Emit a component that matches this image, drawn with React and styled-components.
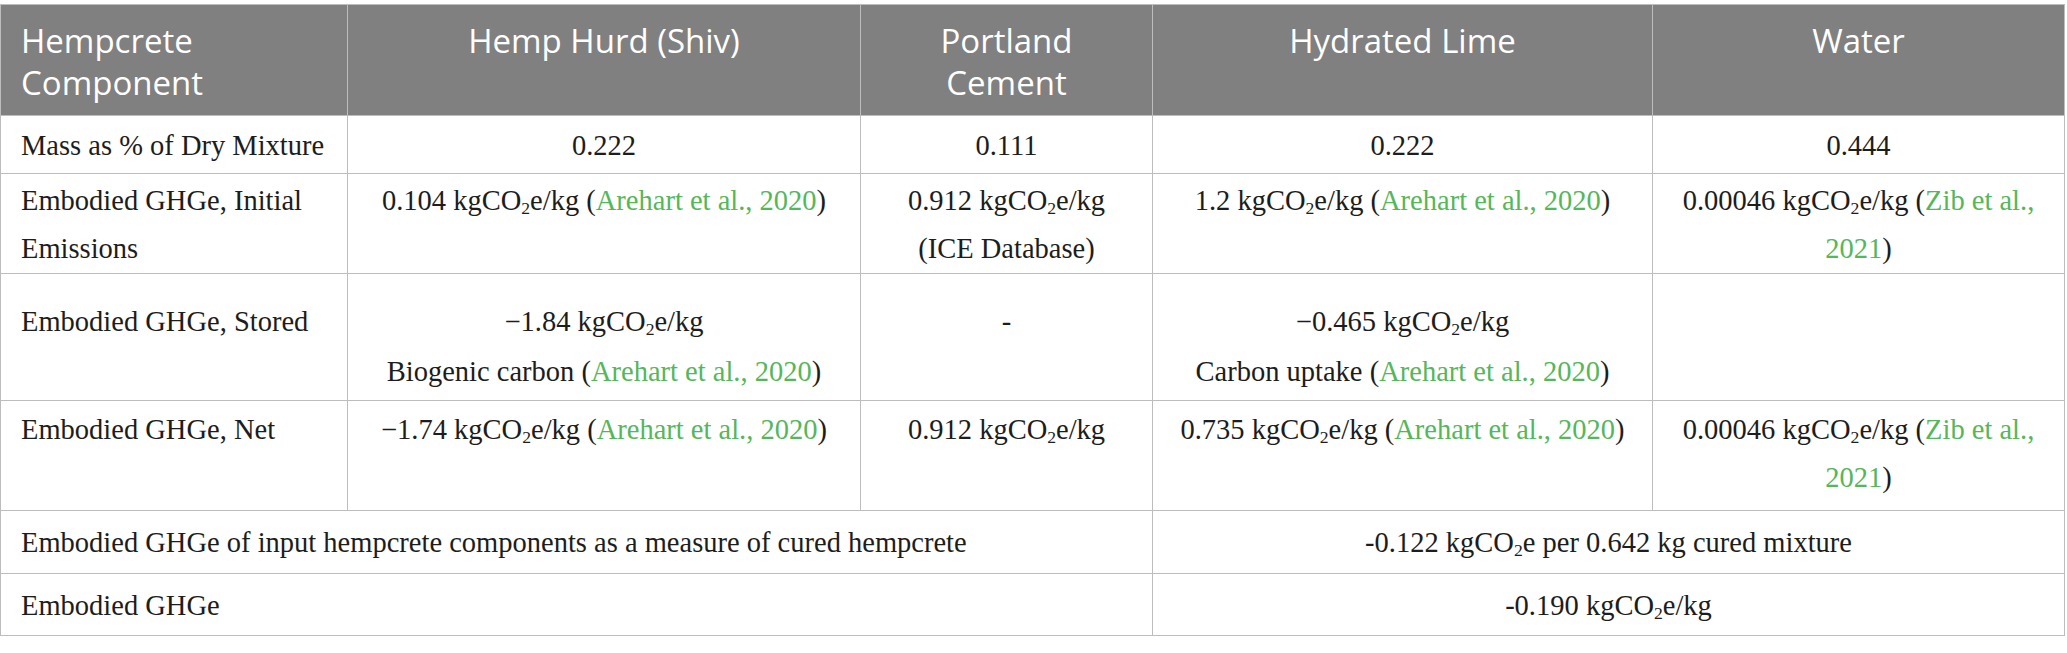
import React from "react";
import styled, { createGlobalStyle } from "styled-components";

const GlobalStyle = createGlobalStyle`
  html, body {
    margin: 0;
    padding: 0;
    background: #ffffff;
  }
  body {
    font-family: "Liberation Serif", "Times New Roman", serif;
  }
`;

const Page = styled.div`
  padding: 4px 3px 0 0;
`;

const Table = styled.table`
  width: 2064px;
  border-collapse: collapse;
  table-layout: fixed;
  border: 1px solid #bdbdbd;
`;

const HeadCell = styled.th`
  background: #7f807f;
  color: #ffffff;
  font-family: "Open Sans", "Noto Sans", sans-serif;
  font-weight: 400;
  font-size: 33px;
  line-height: 42px;
  padding: 15px 20px 11px;
  text-align: ${(p) => (p.$left ? "left" : "center")};
  vertical-align: top;
  border: 1px solid #bdbdbd;
  height: 110px;
  box-sizing: border-box;
`;

const Row = styled.tr`
  height: ${(p) => p.$h}px;
`;

const Cell = styled.td`
  font-size: 28.5px;
  line-height: 48px;
  color: #1d1d1b;
  padding: ${(p) => (p.$mid ? "2px 20px 0" : "3px 20px 0")};
  text-align: ${(p) => (p.$left ? "left" : "center")};
  vertical-align: ${(p) => (p.$mid ? "middle" : "top")};
  border: 1px solid #bdbdbd;
`;

const Line = styled.div`
  margin-top: ${(p) => p.$gap || 0}px;
`;

const Sub = styled.sub`
  font-size: 0.62em;
  vertical-align: -0.25em;
  line-height: 0;
`;

const Cite = styled.span`
  color: #55b759;
`;

const Co2 = ({ tail = "e/kg" }) => (
  <>
    kgCO<Sub>2</Sub>
    {tail}
  </>
);

const Ref = ({ children }) => (
  <>
    (<Cite>{children}</Cite>)
  </>
);

const widths = [347, 513, 292, 500, 412];

const headers = [
  "Hempcrete Component",
  "Hemp Hurd (Shiv)",
  "Portland Cement",
  "Hydrated Lime",
  "Water",
];

export default function App() {
  return (
    <Page>
      <GlobalStyle />
      <Table>
        <colgroup>
          {widths.map((w, i) => (
            <col key={i} style={{ width: w }} />
          ))}
        </colgroup>
        <thead>
          <tr>
            {headers.map((h, i) => (
              <HeadCell key={h} $left={i === 0}>
                {h}
              </HeadCell>
            ))}
          </tr>
        </thead>
        <tbody>
          <Row $h={58}>
            <Cell $left $mid>
              Mass as % of Dry Mixture
            </Cell>
            <Cell $mid>0.222</Cell>
            <Cell $mid>0.111</Cell>
            <Cell $mid>0.222</Cell>
            <Cell $mid>0.444</Cell>
          </Row>
          <Row $h={100}>
            <Cell $left>Embodied GHGe, Initial Emissions</Cell>
            <Cell>
              0.104 <Co2 /> <Ref>Arehart et al., 2020</Ref>
            </Cell>
            <Cell>
              0.912 <Co2 />
              <br />
              (ICE Database)
            </Cell>
            <Cell>
              1.2 <Co2 /> <Ref>Arehart et al., 2020</Ref>
            </Cell>
            <Cell>
              0.00046 <Co2 /> (<Cite>Zib et al., 2021</Cite>)
            </Cell>
          </Row>
          <Row $h={127}>
            <Cell $left>
              <Line $gap={21}>Embodied GHGe, Stored</Line>
            </Cell>
            <Cell>
              <Line $gap={21}>
                −1.84 <Co2 />
              </Line>
              <Line $gap={2}>
                Biogenic carbon <Ref>Arehart et al., 2020</Ref>
              </Line>
            </Cell>
            <Cell>
              <Line $gap={21}>-</Line>
            </Cell>
            <Cell>
              <Line $gap={21}>
                −0.465 <Co2 />
              </Line>
              <Line $gap={2}>
                Carbon uptake <Ref>Arehart et al., 2020</Ref>
              </Line>
            </Cell>
            <Cell />
          </Row>
          <Row $h={110}>
            <Cell $left>
              <Line $gap={2}>Embodied GHGe, Net</Line>
            </Cell>
            <Cell>
              <Line $gap={2}>
                −1.74 <Co2 /> <Ref>Arehart et al., 2020</Ref>
              </Line>
            </Cell>
            <Cell>
              <Line $gap={2}>
                0.912 <Co2 />
              </Line>
            </Cell>
            <Cell>
              <Line $gap={2}>
                0.735 <Co2 /> <Ref>Arehart et al., 2020</Ref>
              </Line>
            </Cell>
            <Cell>
              <Line $gap={2}>
                0.00046 <Co2 /> (<Cite>Zib et al., 2021</Cite>)
              </Line>
            </Cell>
          </Row>
          <Row $h={63}>
            <Cell $left $mid colSpan={3}>
              Embodied GHGe of input hempcrete components as a measure of cured
              hempcrete
            </Cell>
            <Cell $mid colSpan={2}>
              -0.122 <Co2 tail="e" /> per 0.642 kg cured mixture
            </Cell>
          </Row>
          <Row $h={62}>
            <Cell $left $mid colSpan={3}>
              Embodied GHGe
            </Cell>
            <Cell $mid colSpan={2}>
              -0.190 <Co2 />
            </Cell>
          </Row>
        </tbody>
      </Table>
    </Page>
  );
}
